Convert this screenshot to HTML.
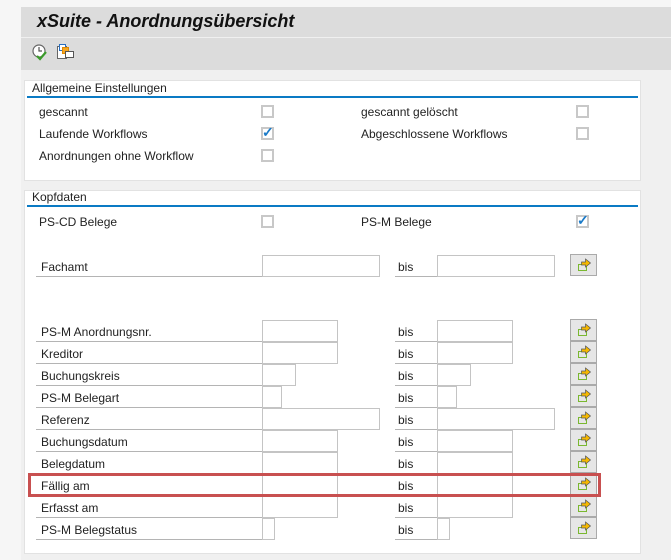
<!DOCTYPE html>
<html><head><meta charset="utf-8"><style>
*{margin:0;padding:0;box-sizing:border-box}
body{width:671px;height:560px;background:#f0f0f0;position:relative;overflow:hidden;font-family:"Liberation Sans",sans-serif;font-size:12px;color:#222}
.a{position:absolute}
.t{position:absolute;white-space:nowrap;line-height:14px}
.cb{position:absolute;width:13px;height:13px;border:2px solid #c8c8c8;background:#fff}
.in{position:absolute;height:22px;border:1px solid #c4c4c4;background:#fff}
.ul{position:absolute;height:1px;background:#b4b4b4}
.btn{position:absolute;width:27px;height:22px;border:1px solid #aaa;background:#e6e6e6}
.btn svg{position:absolute;left:0;top:0}
.panel{position:absolute;left:24px;width:617px;background:#fff;border:1px solid #e2e2e2}
.bl{position:absolute;left:2px;right:2px;height:2px;background:#0a7ac4}
</style></head><body>
<div class="a" style="left:0;top:0;width:671px;height:7px;background:#f6f6f6"></div>
<div class="a" style="left:0;top:0;width:21px;height:560px;background:#f6f6f6"></div>
<div class="a" style="left:21px;top:7px;width:650px;height:30px;background:#dcdcdc"></div>
<div class="t" style="left:37px;top:11px;font-size:18px;line-height:20px;font-weight:bold;font-style:italic;color:#111">xSuite - Anordnungsübersicht</div>
<div class="a" style="left:21px;top:38px;width:650px;height:32px;background:#dcdcdc"></div>
<svg class="a" style="left:31px;top:43px" width="20" height="20" viewBox="0 0 20 20"><circle cx="8" cy="8" r="6" fill="#fff" stroke="#666" stroke-width="1.2"/><path d="M8 4v4h3" stroke="#555" fill="none" stroke-width="1.2"/><path d="M6 13l3 3 6-7" stroke="#3a9a2a" fill="none" stroke-width="2.2"/></svg>
<svg class="a" style="left:56px;top:43px" width="20" height="20" viewBox="0 0 20 20"><rect x="1.5" y="3.5" width="9" height="12" fill="#fff" stroke="#666"/><rect x="3.5" y="1.5" width="6" height="6" fill="#fff" stroke="#2a6fc0"/><rect x="6.5" y="4.5" width="6" height="6" fill="#f5a623" stroke="#e08a00"/><rect x="9.5" y="8.5" width="8" height="6" fill="#fff" stroke="#555"/></svg>

<div class="panel" style="top:80px;height:101px"><div class="bl" style="top:15px"></div></div>
<div class="t" style="left:32px;top:81px">Allgemeine Einstellungen</div>
<div class="t" style="left:39px;top:105px">gescannt</div><div class="cb" style="left:261px;top:105px"></div>
<div class="t" style="left:361px;top:105px">gescannt gelöscht</div><div class="cb" style="left:576px;top:105px"></div>
<div class="t" style="left:39px;top:127px">Laufende Workflows</div><div class="cb" style="left:261px;top:127px"></div>
<div class="t" style="left:262px;top:125px;color:#1a7ac8;font-size:14px;font-weight:bold">✓</div>
<div class="t" style="left:361px;top:127px">Abgeschlossene Workflows</div><div class="cb" style="left:576px;top:127px"></div>
<div class="t" style="left:39px;top:149px">Anordnungen ohne Workflow</div><div class="cb" style="left:261px;top:149px"></div>

<div class="panel" style="top:190px;height:364px"><div class="bl" style="top:14px"></div></div>
<div class="t" style="left:32px;top:190px">Kopfdaten</div>
<div class="t" style="left:39px;top:215px">PS-CD Belege</div><div class="cb" style="left:261px;top:215px"></div>
<div class="t" style="left:361px;top:215px">PS-M Belege</div><div class="cb" style="left:576px;top:215px"></div>
<div class="t" style="left:577px;top:213px;color:#1a7ac8;font-size:14px;font-weight:bold">✓</div>

<div id="rows"></div>
<div class="a" style="left:28px;top:473px;width:573px;height:24px;border:3px solid #c85050"></div>
<script>
var rows=[["Fachamt",255,118],["PS-M Anordnungsnr.",320,76],["Kreditor",342,76],["Buchungskreis",364,34],["PS-M Belegart",386,20],["Referenz",408,118],["Buchungsdatum",430,76],["Belegdatum",452,76],["Fällig am",474,76],["Erfasst am",496,76],["PS-M Belegstatus",518,13]];
var h="";
rows.forEach(function(r){var y=r[1];
h+='<div class="t" style="left:41px;top:'+(y+5)+'px">'+r[0]+'</div>';
h+='<div class="ul" style="left:36px;width:226px;top:'+(y+21)+'px"></div>';
h+='<div class="in" style="left:262px;top:'+y+'px;width:'+r[2]+'px"></div>';
h+='<div class="t" style="left:398px;top:'+(y+5)+'px">bis</div>';
h+='<div class="ul" style="left:395px;width:42px;top:'+(y+21)+'px"></div>';
h+='<div class="in" style="left:437px;top:'+y+'px;width:'+r[2]+'px"></div>';
h+='<div class="btn" style="left:570px;top:'+(y-1)+'px"><svg width="25" height="20" viewBox="0 0 25 20"><rect x="7.5" y="9.5" width="8" height="6" fill="none" stroke="#7ab830"/><path d="M10.5 7h4V4l5 4-5 4V10h-4z" fill="#f5b800" stroke="#555" stroke-width="0.7"/></svg></div>';
});
document.getElementById("rows").innerHTML=h;
</script>
</body></html>
